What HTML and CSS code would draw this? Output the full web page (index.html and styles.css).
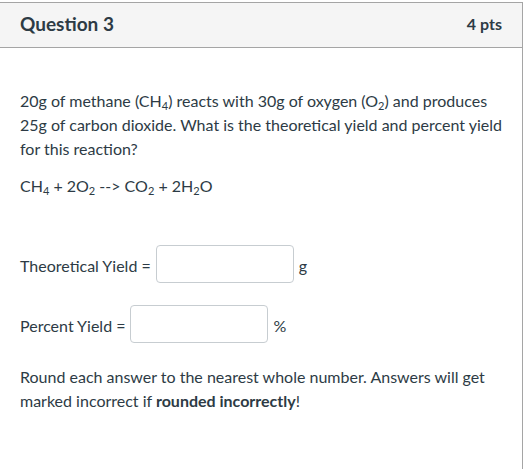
FILE: index.html
```html
<!DOCTYPE html>
<html lang="en">
<head>
<meta charset="utf-8">
<title>Question 3</title>
<link rel="stylesheet" href="styles.css">
</head>
<body>
<div class="question">
  <div class="question-header">
    <span class="question-title">Question 3</span>
    <span class="question-points">4 pts</span>
  </div>
  <div class="question-body">
    <p class="text">20g of methane (CH<sub>4</sub>) reacts with 30g of oxygen (O<sub>2</sub>) and produces 25g of carbon dioxide. What is the theoretical yield and percent yield for this reaction?</p>
    <p class="equation">CH<sub>4</sub> + 2O<sub>2</sub> --&gt; CO<sub>2</sub> + 2H<sub>2</sub>O</p>
    <div class="answer-row first">
      <span class="label">Theoretical Yield =</span>
      <input class="answer" type="text" aria-label="Theoretical Yield">
      <span class="unit">g</span>
    </div>
    <div class="answer-row">
      <span class="label">Percent Yield =</span>
      <input class="answer" type="text" aria-label="Percent Yield">
      <span class="unit">%</span>
    </div>
    <p class="note">Round each answer to the nearest whole number. Answers will get marked incorrect if <strong>rounded incorrectly</strong>!</p>
  </div>
</div>
</body>
</html>
```
FILE: styles.css
```css
html, body {
  margin: 0;
  padding: 0;
  background: #ffffff;
}
body {
  font-family: Lato, "Noto Sans", "Liberation Sans", sans-serif;
  color: #2d3b45;
  font-size: 16px;
  overflow: hidden;
}
.question {
  margin: 2px 0 0 -1px;
  width: 524px;
  height: 467px;
  border-top: 1px solid #a5a5a5;
  border-right: 1px solid #a5a5a5;
  border-left: 1px solid #a5a5a5;
  box-sizing: border-box;
}
.question-header {
  height: 40px;
  background: #f5f5f5;
  border-bottom: 1px solid #a5a5a5;
  display: flex;
  align-items: center;
  justify-content: space-between;
  padding: 0 20px 4px 20px;
}
.question-title {
  font-weight: 700;
  font-size: 19px;
  color: #2d3b45;
}
.question-points {
  font-weight: 700;
  font-size: 16px;
  color: #2d3b45;
}
.question-body {
  padding: 41px 8px 0 20px;
}
p {
  margin: 0;
  line-height: 24px;
}
sub {
  font-size: 11px;
  line-height: 11px;
  vertical-align: -3px;
}
.equation {
  margin-top: 13px;
}
.answer-row {
  display: flex;
  align-items: center;
  margin-top: 22px;
  height: 38px;
}
.answer-row.first {
  margin-top: 47px;
}
.label,
.unit {
  padding-top: 2px;
}
.label {
  margin-right: 5px;
}
.answer {
  width: 138px;
  height: 38px;
  box-sizing: border-box;
  border: 1px solid #c7cdd1;
  border-radius: 4px;
  background: #fff;
  margin: 0;
  padding: 0 8px;
  font: inherit;
}
.unit {
  margin-left: 5px;
}
.note {
  margin-top: 22px;
}
strong {
  font-weight: 700;
}
```
